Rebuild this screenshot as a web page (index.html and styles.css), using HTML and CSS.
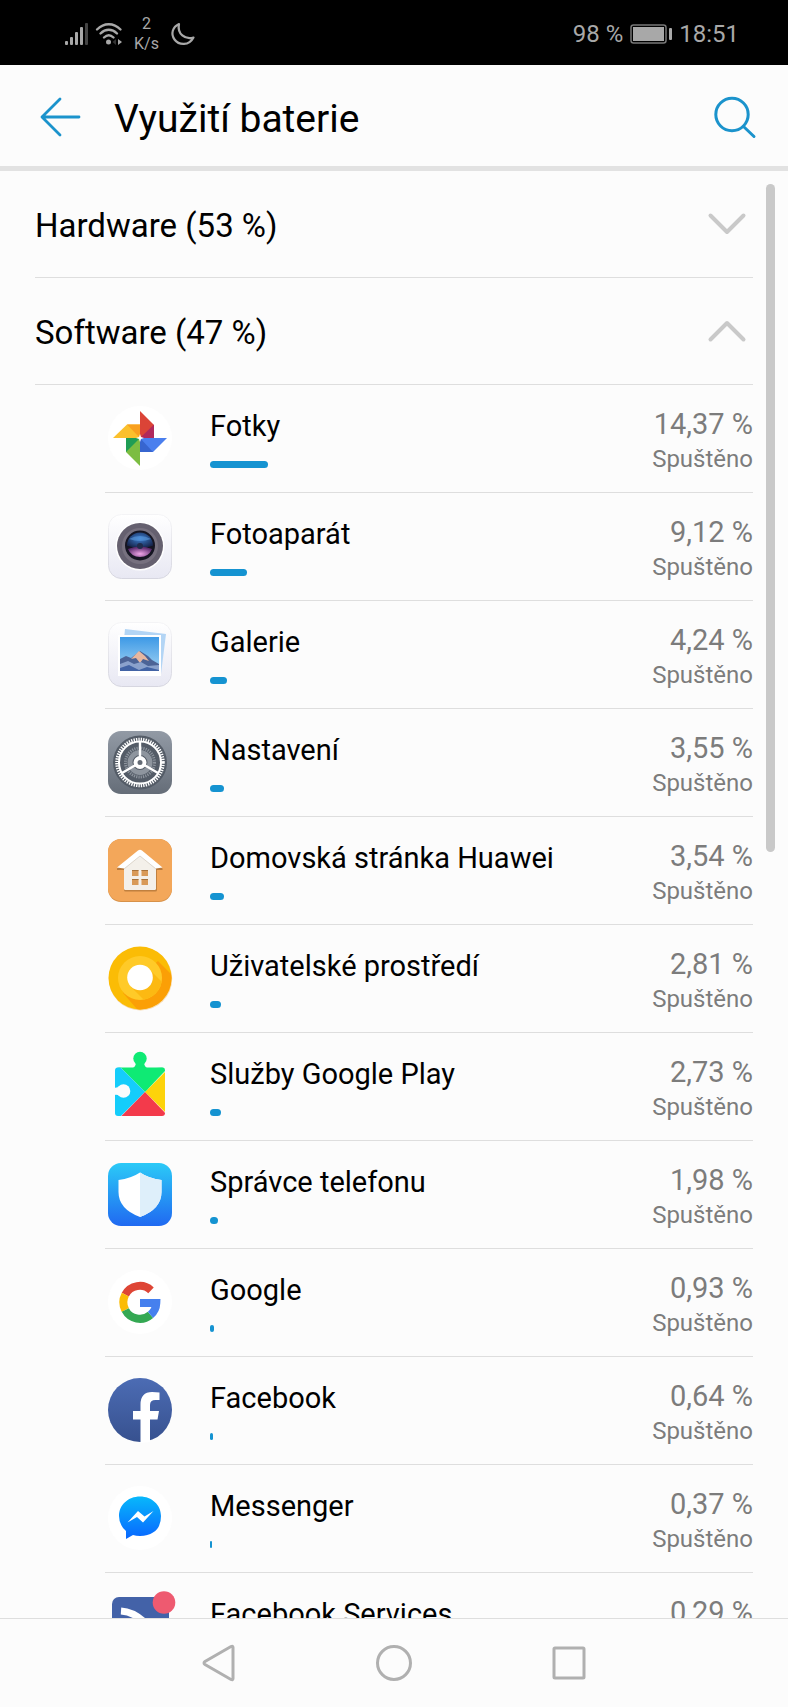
FILE: index.html
```html
<!DOCTYPE html>
<html lang="cs">
<head>
    <meta charset="UTF-8">
    <meta name="viewport" content="width=device-width, initial-scale=1.0">
    <title>Využití baterie</title>
    <link rel="stylesheet" href="styles.css">
</head>
<body>
    <div class="status-bar">
        <div class="status-left">
            <svg class="signal" width="24" height="22" viewBox="0 0 24 22" fill="#a8a8a8">
                <rect x="0" y="18" width="3" height="4" rx="1"/>
                <rect x="5" y="14" width="3" height="8" rx="1"/>
                <rect x="10" y="9" width="3" height="13" rx="1"/>
                <rect x="15" y="4" width="3" height="18" rx="1"/>
                <rect x="20" y="0" width="3" height="22" rx="1" fill="#444"/>
            </svg>
            <svg class="wifi" width="28" height="22" viewBox="0 0 28 22" fill="none" stroke="#a8a8a8" stroke-width="2.4" stroke-linecap="round">
                <path d="M2 6.500C9 -.6 18.500 -.6 25.500 6.500"/>
                <path d="M5.500 10.500C10.500 5.500 17 5.500 22 10.500"/>
                <path d="M9 14.500C12 11.600 15.500 11.600 18.500 14.500"/>
                <circle cx="13.500" cy="19" r="2.500" fill="#a8a8a8" stroke="none"/>
                <path d="M21 16v6l-3.500-3z" fill="#333" stroke="none"/>
                <path d="M23 16v6l4-3z" fill="#a8a8a8" stroke="none"/>
            </svg>
            <div class="speed"><span>2</span><span>K/s</span></div>
            <svg class="moon" width="24" height="24" viewBox="0 0 24 24" fill="none" stroke="#a8a8a8" stroke-width="2.200" stroke-linejoin="round">
                <path d="M8 2C1.500 5 -.5 12 3.500 17.500C8 23.500 18 24 22.500 15.500C14 18 6 12 8 2z"/>
            </svg>
        </div>
        <div class="status-right">
            <span>98 %</span>
            <svg width="42" height="20" viewBox="0 0 42 20">
                <rect x="1" y="1" width="35" height="18" rx="2.500" fill="none" stroke="#777" stroke-width="1.500"/>
                <rect x="3" y="3" width="31" height="14" fill="#a8a8a8"/>
                <rect x="39" y="4" width="3" height="12" rx="1" fill="#a8a8a8"/>
            </svg>
            <span>18:51</span>
        </div>
    </div>

    <header class="header">
        <button class="icon-button" aria-label="Zpět">
            <svg width="40" height="40" viewBox="0 0 40 40" fill="none" stroke="#1b93cc" stroke-width="2.800" stroke-linecap="round" stroke-linejoin="round">
                <path d="M20 2L2 20l18 18M2 20h37"/>
            </svg>
        </button>
        <h1>Využití baterie</h1>
        <button class="icon-button" aria-label="Hledat">
            <svg width="42" height="42" viewBox="0 0 42 42" fill="none" stroke="#1b93cc" stroke-width="3" stroke-linecap="round">
                <circle cx="18" cy="18.500" r="16.200"/>
                <path d="M29.500 30.500L40 40.500"/>
            </svg>
        </button>
    </header>

    <main class="content">
        <button class="group" aria-expanded="false">
            <span>Hardware (53 %)</span>
            <svg width="38" height="22" viewBox="0 0 38 22"><path d="M2.500 2.500L19 19 35.500 2.500"/></svg>
        </button>
        <button class="group" aria-expanded="true">
            <span>Software (47 %)</span>
            <svg width="38" height="22" viewBox="0 0 38 22"><path d="M2.500 19.500L19 3 35.500 19.500"/></svg>
        </button>

        <ul class="apps">
            <li class="app">
                <svg class="app-icon" viewBox="0 0 64 64">
                    <circle cx="32" cy="32" r="32" fill="#fff"/>
                    <path d="M32 5l14 14v13H32z" fill="#db4437"/>
                    <path d="M46 18.500V32H32z" fill="#b0295c"/>
                    <path d="M5 32l14-13.500h13V32z" fill="#fbc02d"/>
                    <path d="M19 18.500h13V32z" fill="#f9a01f"/>
                    <path d="M59 32L45 46H32V32z" fill="#4a7fee"/>
                    <path d="M45 46H32V32z" fill="#3765cf"/>
                    <path d="M32 60L18 46V32h14z" fill="#7cbd42"/>
                    <path d="M18 46V32h14z" fill="#1f9d55"/>
                    <path d="M32 28l1 3 3 1-3 1-1 3-1-3-3-1 3-1z" fill="#fff"/>
                </svg>
                <div class="info"><h2>Fotky</h2><div class="bar"><div class="fill" style="width: 14.37%"></div></div></div>
                <div class="stats"><span class="percent">14,37 %</span><span class="state">Spuštěno</span></div>
            </li>
            <li class="app">
                <svg class="app-icon" viewBox="0 0 64 64">
                    <defs>
                        <linearGradient id="white" x2="0" y2="1"><stop offset="0" stop-color="#fff"/><stop offset="1" stop-color="#e8e8f3"/></linearGradient>
                        <linearGradient id="edge" x2="0" y2="1"><stop offset="0" stop-color="#f4f4f6"/><stop offset="1" stop-color="#d6d6e0"/></linearGradient>
                        <radialGradient id="pink" cx=".5" cy=".7" r=".6"><stop offset="0" stop-color="#f0a6e8"/><stop offset="1" stop-color="#5f2d70"/></radialGradient>
                        <radialGradient id="glass" cx=".5" cy=".4" r=".6"><stop offset="0" stop-color="#3d7fd0"/><stop offset="1" stop-color="#17274f"/></radialGradient>
                    </defs>
                    <rect x=".5" y=".5" width="63" height="64" rx="13" fill="url(#white)" stroke="url(#edge)"/>
                    <circle cx="32" cy="32" r="24.500" fill="#fff"/>
                    <circle cx="32" cy="32" r="23" fill="#65606f"/>
                    <circle cx="32" cy="32" r="18" fill="#77717f"/>
                    <circle cx="32" cy="31.500" r="15" fill="#151522"/>
                    <path d="M19 31.500a13 13 0 0 1 26 0q-13 5-26 0z" fill="url(#glass)"/>
                    <path d="M20 35q12-5 24 0a13 13 0 0 1-24 0z" fill="url(#pink)"/>
                    <path d="M21 25q11-6 22 0-11 4-22 0z" fill="#5c9ce0" opacity=".6"/>
                    <circle cx="32" cy="32" r="3" fill="#202c4c"/>
                </svg>
                <div class="info"><h2>Fotoaparát</h2><div class="bar"><div class="fill" style="width: 9.12%"></div></div></div>
                <div class="stats"><span class="percent">9,12 %</span><span class="state">Spuštěno</span></div>
            </li>
            <li class="app">
                <svg class="app-icon" viewBox="0 0 64 64">
                    <defs>
                        <linearGradient id="sky" x2="0" y2="1"><stop offset="0" stop-color="#3d99e6"/><stop offset="1" stop-color="#a3d4f3"/></linearGradient>
                    </defs>
                    <rect x=".5" y=".5" width="63" height="64" rx="13" fill="url(#white)" stroke="url(#edge)"/>
                    <path d="M17 7l41 5-5 40-40-5z" fill="#b3d5f5"/>
                    <rect x="10" y="13" width="43" height="41" fill="#fff"/>
                    <rect x="12" y="15" width="39" height="34" fill="url(#sky)"/>
                    <path d="M12 37l6-3 5 2 9-7 8 5 4 4 7 4v7H12z" fill="#4c6396"/>
                    <path d="M23 37l8-8 6 5 4 5-6-2-3 4-4-5z" fill="#e7b7a0"/>
                    <path d="M12 42l8-3 6 3 7-2 7 4 11-1v6H12z" fill="#8aa1cc"/>
                    <path d="M12 46l9-3 10 5 8-3 12 3v1H12z" fill="#4263a5"/>
                </svg>
                <div class="info"><h2>Galerie</h2><div class="bar"><div class="fill" style="width: 4.24%"></div></div></div>
                <div class="stats"><span class="percent">4,24 %</span><span class="state">Spuštěno</span></div>
            </li>
            <li class="app">
                <svg class="app-icon" viewBox="0 0 64 64">
                    <defs>
                        <linearGradient id="steel" x2="0" y2="1"><stop offset="0" stop-color="#929aa5"/><stop offset="1" stop-color="#656d78"/></linearGradient>
                    </defs>
                    <rect y="1" width="64" height="63" rx="13" fill="url(#steel)"/>
                    <circle cx="32" cy="32.500" r="27" fill="#545c67"/>
                    <g fill="none" stroke="#fff">
                        <circle cx="32" cy="32.500" r="23" stroke-width="3.500" stroke-dasharray="1.300 1.110"/>
                        <circle cx="32" cy="32.500" r="21" stroke-width="2"/>
                        <circle cx="32" cy="32.500" r="14.500" stroke="#8e959e" stroke-width="3" stroke-dasharray="1.200 1.100"/>
                        <circle cx="32" cy="32.500" r="10" stroke="#8e959e" stroke-width="5"/>
                        <path d="M32 32.500V12M32 32.500l-18 10.500M32 32.500L50 43" stroke-width="2.400"/>
                    </g>
                    <circle cx="32" cy="32.500" r="6.500" fill="#fff"/>
                    <circle cx="32" cy="32.500" r="2.500" fill="#646b75"/>
                </svg>
                <div class="info"><h2>Nastavení</h2><div class="bar"><div class="fill" style="width: 3.55%"></div></div></div>
                <div class="stats"><span class="percent">3,55 %</span><span class="state">Spuštěno</span></div>
            </li>
            <li class="app">
                <svg class="app-icon" viewBox="0 0 64 64">
                    <rect y="1" width="64" height="63" rx="13" fill="#d79149"/>
                    <rect y="1" width="64" height="62" rx="13" fill="#f3a75a"/>
                    <path d="M16 32v20q0 1.500 1.500 1.500h30Q49 53.500 49 52V32z" fill="#c0803f"/>
                    <path d="M9 30.500L32 12l22.500 18.500v1.500H47L32 21 17 32H9z" fill="#b87b3f"/>
                    <path d="M16 28L32 16l16 12v22.500q0 1.500-1.500 1.500h-29Q16 52 16 50.500z" fill="#f4f0ea"/>
                    <path d="M9 29.500L30 12.500q2-1.500 4 0L54.500 29.500 48 30.500 32 18 16 30.500z" fill="#fff"/>
                    <path d="M16 31l16-13 16 13" fill="none" stroke="#ddd6cc" stroke-width="1"/>
                    <path d="M24 32h6.500v6H24zM33.500 32H40v6h-6.500zM24 41h6.500v6H24zM33.500 41H40v6h-6.500z" fill="#d99a58"/>
                    <path d="M24 32.500h6.500M33.500 32.500H40M24 41.500h6.500M33.500 41.500H40" stroke="#a8733c"/>
                </svg>
                <div class="info"><h2>Domovská stránka Huawei</h2><div class="bar"><div class="fill" style="width: 3.54%"></div></div></div>
                <div class="stats"><span class="percent">3,54 %</span><span class="state">Spuštěno</span></div>
            </li>
            <li class="app">
                <svg class="app-icon" viewBox="0 0 64 64">
                    <defs>
                        <clipPath id="disc"><circle cx="32" cy="32" r="31.500"/></clipPath>
                        <clipPath id="ring"><circle cx="32" cy="32" r="22"/></clipPath>
                    </defs>
                    <circle cx="32.500" cy="32.800" r="31.700" fill="#f7d9ad"/>
                    <circle cx="32" cy="32" r="31.500" fill="#fbbc05"/>
                    <g clip-path="url(#disc)">
                        <path d="M50 15L70 35v35H35L15 47z" fill="#fb9f06"/>
                    </g>
                    <circle cx="32" cy="32" r="22" fill="#ffca28"/>
                    <g clip-path="url(#ring)">
                        <path d="M41 23l20 20-18 18-20-20z" fill="#fcb912"/>
                    </g>
                    <circle cx="32" cy="31.500" r="12.800" fill="#fff"/>
                </svg>
                <div class="info"><h2>Uživatelské prostředí</h2><div class="bar"><div class="fill" style="width: 2.81%"></div></div></div>
                <div class="stats"><span class="percent">2,81 %</span><span class="state">Spuštěno</span></div>
            </li>
            <li class="app">
                <svg class="app-icon" viewBox="0 0 64 64">
                    <defs>
                        <clipPath id="piece"><rect x="7" y="13.500" width="50" height="48.500" rx="3"/></clipPath>
                    </defs>
                    <circle cx="32" cy="4.500" r="6.700" fill="#0fea74"/>
                    <path d="M28 8h8q0 4 3 6H25q3-2 3-6z" fill="#0fea74"/>
                    <g clip-path="url(#piece)">
                        <path d="M7 13h50v1L37 38 13 14z" fill="#0fea74"/>
                        <path d="M7 10l5.500 3.500L37 38 12 63H7z" fill="#14cdfb"/>
                        <path d="M57 18L37 38l20 20z" fill="#fdd30a"/>
                        <path d="M37 38l22-23-2-2-9 1z" fill="#0fea74"/>
                        <path d="M12.500 63L37 38l24 25z" fill="#f33a4b"/>
                    </g>
                    <circle cx="15.500" cy="37" r="6.800" fill="#fcfcfc"/>
                    <path d="M6 33.500q3 .5 6-1v9.500q-3-2-6-1z" fill="#fcfcfc"/>
                </svg>
                <div class="info"><h2>Služby Google Play</h2><div class="bar"><div class="fill" style="width: 2.73%"></div></div></div>
                <div class="stats"><span class="percent">2,73 %</span><span class="state">Spuštěno</span></div>
            </li>
            <li class="app">
                <svg class="app-icon" viewBox="0 0 64 64">
                    <defs>
                        <linearGradient id="blue" x2="0" y2="1"><stop offset="0" stop-color="#2bcaf7"/><stop offset="1" stop-color="#2069f1"/></linearGradient>
                    </defs>
                    <rect y="1" width="64" height="63" rx="13" fill="url(#blue)"/>
                    <path d="M32 10.500q9 6 21.500 7.500v12Q53.500 47 32 55 10.500 47 10.500 30V18Q23 16.500 32 10.500z" fill="#fff"/>
                    <path d="M32 10.500q9 6 21.500 7.500v12Q53.500 47 32 55z" fill="#deeffa"/>
                </svg>
                <div class="info"><h2>Správce telefonu</h2><div class="bar"><div class="fill" style="width: 1.98%"></div></div></div>
                <div class="stats"><span class="percent">1,98 %</span><span class="state">Spuštěno</span></div>
            </li>
            <li class="app">
                <svg class="app-icon" viewBox="0 0 64 64">
                    <circle cx="32" cy="32" r="32" fill="#fff"/>
                    <g fill="none" stroke-width="8">
                        <path d="M17.300 24.600A16.400 16.400 0 0 1 43 20.300" stroke="#de4535"/>
                        <path d="M17.300 40A16.400 16.400 0 0 1 17.300 24.600" stroke="#fbbc05"/>
                        <path d="M42.500 44.900A16.400 16.400 0 0 1 17.300 40" stroke="#34a853"/>
                        <path d="M32 33h16.300A16.400 16.400 0 0 1 42.500 44.900" stroke="#4680ee"/>
                    </g>
                </svg>
                <div class="info"><h2>Google</h2><div class="bar"><div class="fill" style="width: 0.93%"></div></div></div>
                <div class="stats"><span class="percent">0,93 %</span><span class="state">Spuštěno</span></div>
            </li>
            <li class="app">
                <svg class="app-icon" viewBox="0 0 64 64">
                    <defs>
                        <linearGradient id="fb" x2="0" y2="1"><stop offset="0" stop-color="#4c6cb4"/><stop offset="1" stop-color="#37518f"/></linearGradient>
                    </defs>
                    <circle cx="32" cy="32" r="32" fill="url(#fb)"/>
                    <path d="M32.500 65V41.500H25V33h7.500v-6.500Q32.500 14 44 14q4 0 7.500.5V22h-4q-5.500 0-5.500 5v6h9l-1.500 8.500H42V64z" fill="#fff"/>
                </svg>
                <div class="info"><h2>Facebook</h2><div class="bar"><div class="fill" style="width: 0.64%"></div></div></div>
                <div class="stats"><span class="percent">0,64 %</span><span class="state">Spuštěno</span></div>
            </li>
            <li class="app">
                <svg class="app-icon" viewBox="0 0 64 64">
                    <defs>
                        <linearGradient id="chat" x2="0" y2="1"><stop offset="0" stop-color="#08b8fb"/><stop offset="1" stop-color="#0866ff"/></linearGradient>
                    </defs>
                    <circle cx="32" cy="32" r="32" fill="#fff"/>
                    <path d="M32 10.500C20 10.500 11 19 11 30q0 9 7 15v8l7-4q3 1 7 1 21-1 21-20C53 19 44 10.500 32 10.500z" fill="url(#chat)"/>
                    <path d="M19.500 36.500L30 25l6.500 5.500L45.500 25 35 36.500 29 31z" fill="#fff"/>
                </svg>
                <div class="info"><h2>Messenger</h2><div class="bar"><div class="fill" style="width: 0.37%"></div></div></div>
                <div class="stats"><span class="percent">0,37 %</span><span class="state">Spuštěno</span></div>
            </li>
            <li class="app">
                <svg class="app-icon" viewBox="0 0 64 64">
                    <rect x="4" y="3" width="57" height="57" rx="7" fill="#4362a8"/>
                    <path d="M13 17q15 1 28 16" fill="none" stroke="#fff" stroke-width="7"/>
                    <circle cx="56" cy="8.500" r="11.300" fill="#ee5a70"/>
                </svg>
                <div class="info"><h2>Facebook Services</h2><div class="bar"><div class="fill" style="width: 0.29%"></div></div></div>
                <div class="stats"><span class="percent">0,29 %</span></div>
            </li>
        </ul>
    </main>
    <div class="scroll-thumb"></div>

    <nav class="nav-bar">
        <button aria-label="Zpět"><svg width="36" height="38" viewBox="0 0 36 38"><path d="M32 3.500v31q0 2-2 1L4 20.500q-2-1.500 0-3L30 2.500q2-1 2 1z"/></svg></button>
        <button aria-label="Domů"><svg width="38" height="38" viewBox="0 0 38 38"><circle cx="19" cy="19" r="16.500"/></svg></button>
        <button aria-label="Poslední aplikace"><svg width="38" height="38" viewBox="0 0 38 38"><rect x="4" y="4" width="30" height="30" rx="1"/></svg></button>
    </nav>
</body>
</html>
```

FILE: styles.css
```css
* {
    box-sizing: border-box;
}
body {
    margin: 0;
    height: 100vh;
    display: flex;
    flex-direction: column;
    position: relative;
    font-family: Roboto, "Noto Sans", sans-serif;
    background-color: #fcfcfc;
    color: #000;
}
h1, h2, ul {
    margin: 0;
    padding: 0;
    font-weight: normal;
}
button {
    background: none;
    border: none;
    padding: 0;
    margin: 0;
    font: inherit;
    color: inherit;
    cursor: pointer;
}
svg {
    display: block;
    flex: none;
    overflow: visible;
}

/* status bar */
.status-bar {
    flex: none;
    height: 65px;
    padding: 2px 49px 0 65px;
    display: flex;
    justify-content: space-between;
    align-items: center;
    background-color: #000;
    color: #a8a8a8;
}
.status-left {
    display: flex;
    align-items: center;
    gap: 6px;
}
.speed {
    display: flex;
    flex-direction: column;
    align-items: center;
    margin: 0 6px 0 5px;
    font-size: 16px;
    line-height: 20px;
}
.status-right {
    display: flex;
    align-items: center;
    gap: 7px;
    font-size: 24px;
    line-height: 32px;
}

/* header */
.header {
    flex: none;
    height: 106px;
    padding: 3px 32px 0 40px;
    display: flex;
    align-items: center;
    border-bottom: 5px solid #e2e2e2;
}
.header h1 {
    flex: 1;
    margin-left: 34px;
    padding-top: 4px;
    font-size: 39px;
    line-height: 46px;
}

/* list */
.content {
    flex: 1;
    min-height: 0;
    padding: 0 35px;
    overflow-y: auto;
    scrollbar-width: none;
}
.group {
    width: 100%;
    height: 107px;
    padding-right: 7px;
    display: flex;
    align-items: center;
    justify-content: space-between;
    border-bottom: 1px solid #dedede;
    font-size: 33px;
    line-height: 40px;
}
.group span {
    padding-top: 3px;
}
.group path {
    fill: none;
    stroke: #c9c9c9;
    stroke-width: 4;
    stroke-linecap: round;
    stroke-linejoin: round;
}
.apps {
    list-style: none;
    margin-left: 70px;
}
.app {
    height: 108px;
    padding-left: 3px;
    display: flex;
    border-bottom: 1px solid #dedede;
}
.app-icon {
    width: 64px;
    height: 64px;
    margin-top: 21px;
}
.info {
    flex: 1;
    min-width: 0;
    margin: 25px 40px 0 38px;
}
.info h2 {
    font-size: 29px;
    line-height: 32px;
    white-space: nowrap;
}
.bar {
    margin-top: 19px;
}
.fill {
    height: 7px;
    min-width: 2px;
    border-radius: 4px;
    background-color: #1593d1;
}
.stats {
    display: flex;
    flex-direction: column;
    align-items: flex-end;
    gap: 3px;
    margin-top: 23px;
    color: #7c7c7c;
    line-height: 32px;
}
.percent {
    font-size: 29px;
}
.state {
    font-size: 24px;
}
.scroll-thumb {
    position: absolute;
    top: 184px;
    right: 13px;
    width: 9px;
    height: 668px;
    border-radius: 5px;
    background-color: #c9c9c9;
}

/* navigation */
.nav-bar {
    flex: none;
    height: 89px;
    display: flex;
    justify-content: center;
    border-top: 1px solid #dedede;
}
.nav-bar button {
    width: 175px;
    display: flex;
    align-items: center;
    justify-content: center;
}
.nav-bar svg {
    fill: none;
    stroke: #b0b0b0;
    stroke-width: 3;
}
```
